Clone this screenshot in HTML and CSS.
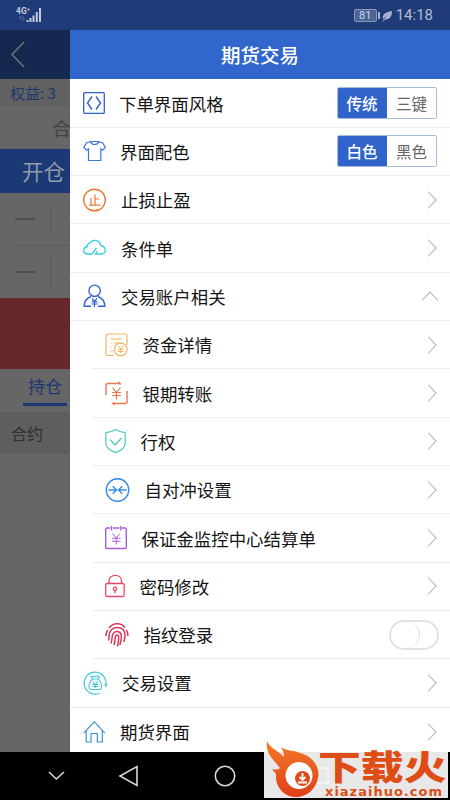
FILE: index.html
```html
<!DOCTYPE html>
<html lang="zh-CN">
<head>
<meta charset="utf-8">
<title>期货交易</title>
<link rel="stylesheet" href="styles.css">
</head>
<body>
<div class="phone">
  <header class="status">
    <svg class="signal" width="28" height="18" viewBox="0 0 28 18"><text x="0" y="8" class="net">4G⁺</text><path d="M4.500 10v4.500M3 12l1.500-2 M7 10v4.500l1.500-2" stroke="#536a9d" fill="none"/><path d="M11.500 16v-2M14.500 16v-4M17.500 16V9.500M20.800 16V6M24 16V2" stroke="#c3cbdd" stroke-width="2"/></svg>
    <div class="status-right">
      <span class="battery">81</span><i class="battery-tip"></i>
      <svg width="11" height="12" viewBox="0 0 11 12"><path d="M1 9C0 4 4 2 10 1c0 5-2 9-7 8.500L1 11.500 .5 11l5-6z" fill="#a9b5ce"/></svg>
      <time>14:18</time>
    </div>
  </header>
  <div class="body">
    <aside class="behind">
      <div class="back"><svg width="15" height="27" viewBox="0 0 15 27"><path d="M14 1 2 13.500 14 26" fill="none" stroke="#777672" stroke-width="1.400"/></svg></div>
      <div class="equity">权益: 3</div>
      <div class="contract">合</div>
      <div class="open">开仓</div>
      <div class="field"><i></i></div>
      <div class="field second"><i></i></div>
      <div class="sell"></div>
      <div class="tab"><span>持仓</span></div>
      <div class="column">合约</div>
    </aside>
    <main class="drawer">
      <h1>期货交易</h1>
      <div class="row"><svg class="ic w22" viewBox="0 0 22 24" stroke="#2f62cc"><rect x=".7" y="1.700" width="20.600" height="20.600" rx="1" stroke-width="1.300"/><path d="M9 5.500 4.500 12 9 18.500M13 5.500l4.500 6.500-4.500 6.500" stroke-width="1.400"/></svg><span>下单界面风格</span><div class="seg"><b>传统</b><em>三键</em></div></div>
      <div class="row"><svg class="ic w23" viewBox="0 0 23 24" stroke="#3e74d8"><path d="M7.500 2.500 3.500 4 .8 8.500l3 2.700L5.500 10v11.500h12.300V10l1.700 1.200 3-2.700L19.700 4l-4-1.500c-1.200 4-7 4-8.200 0zM7.500 2.500h8.200" stroke-width="1.200"/></svg><span>界面配色</span><div class="seg"><b>白色</b><em>黑色</em></div></div>
      <div class="row"><svg class="ic w24" viewBox="0 0 24 24" stroke="#ee7831"><circle cx="11.500" cy="12" r="10.800" stroke-width="1.400"/><path d="M12 6.500v10.500M12 11h4.500M8 10v7M6 17.200h11.500" stroke-width="1.200"/></svg><span>止损止盈</span><i class="next"></i></div>
      <div class="row"><svg class="ic w24" viewBox="0 0 24 24" stroke="#35cce0"><path d="M9 18H4.500C-.5 17.500-.5 11.500 4.500 10.500 4 8 5.500 7.200 7 7.200c3-5 10-3 10.500 2.300 5 .5 6.500 7 2 8.500h-7l2-3M9 18l4.500-6" stroke-width="1.300"/></svg><span>条件单</span><i class="next"></i></div>
      <div class="row"><svg class="ic w24" viewBox="0 0 24 24" stroke="#2f62d8"><circle cx="11.600" cy="6.800" r="5.700" stroke-width="1.400"/><path d="M8 22.300H1.200c0-5 2-8 6.800-9.800M15 12.500c4.500 1.800 6.800 4.800 6.800 9.800H15" stroke-width="1.400"/><path d="m9 14.500 2.500 2.800 2.500-2.800M11.500 17v6M8.500 17.800h6M8.500 20h6" stroke-width="1.200"/></svg><span>交易账户相关</span><i class="next up"></i></div>
      <div class="group">
        <div class="row"><svg class="ic w23" viewBox="0 0 23 24" stroke="#f2b45d"><path d="M9 22.500H3a2 2 0 0 1-2-2V3a2 2 0 0 1 2-2h17a2 2 0 0 1 2 2v9M5.500 6H17M5.500 10h1M9 10h7M5.500 14h1M5.500 18h2.500" stroke-width="1.200"/><circle cx="15.800" cy="16.500" r="6.300" stroke-width="1.200"/><path d="m13.500 13 2.300 3 2.300-3M15.800 16v4.500M13 16.300h5.500M13 18.500h5.500"/></svg><span>资金详情</span><i class="next"></i></div>
        <div class="row"><svg class="ic w23" viewBox="0 0 23 24" stroke="#ed7950"><path d="M1 14V4.500a2 2 0 0 1 2-2h12L13.500.8M22 10v10.500a2 2 0 0 1-2 2H8l1.500 1.300M15 2.500v1.300M8 22.500v-1.300" stroke-width="1.400"/><path d="m7.500 6.500 4 5 4-5M11.500 11.500v7M7 11.500h9M7 14.500h9" stroke-width="1.200"/></svg><span>银期转账</span><i class="next"></i></div>
        <div class="row"><svg class="ic w21" viewBox="0 0 21 24" stroke="#4dc9ba"><path d="M10.500.5C7.500 2.500 4.500 3.500.8 3.700v10c0 4.500 4 7.800 9.700 9.900 5.700-2.100 9.700-5.400 9.700-9.900v-10C16.500 3.500 13.500 2.500 10.500.5z" stroke-width="1.200"/><path d="m5 10.500 5 5.500L16.500 9" stroke-width="1.200"/></svg><span>行权</span><i class="next"></i></div>
        <div class="row"><svg class="ic w25" viewBox="0 0 25 25" stroke="#348be9"><circle cx="12.500" cy="12.500" r="11.700" stroke-width="1.400"/><path d="M3 12.500h8M7.500 8.500l4 4-4 4M22 12.500h-8M17.500 8.500l-4 4 4 4" stroke-width="1.400"/></svg><span>自对冲设置</span><i class="next"></i></div>
        <div class="row"><svg class="ic w22" viewBox="0 0 22 24" stroke="#a95bdd"><path d="M5 2H2a1.300 1.300 0 0 0-1.300 1.300V21A1.300 1.300 0 0 0 2 22.500h18a1.300 1.300 0 0 0 1.300-1.300V3.300A1.300 1.300 0 0 0 20 2h-3M8 2h6.500M6.500 0v4.500M15.800 0v4.500" stroke-width="1.400"/><path d="m7.500 7.500 3.700 4.500L15 7.500M11.200 12v6.500M7 12.300h8.500M7 15.200h8.500"/></svg><span>保证金监控中心结算单</span><i class="next"></i></div>
        <div class="row"><svg class="ic w20" viewBox="0 0 20 24" stroke="#e84867"><rect x=".7" y="9.500" width="18.500" height="13" rx="1.500" stroke-width="1.300"/><path d="M4 9.500V7c0-7.500 12.500-7.500 12.500 0v2.500" stroke-width="1.300"/><circle cx="10" cy="14.800" r="1.700" stroke-width="1.300"/><path d="M10 16.500v2.500" stroke-width="1.500"/></svg><span>密码修改</span><i class="next"></i></div>
        <div class="row"><svg class="ic w24" viewBox="0 0 24 24" stroke="#dc3858" stroke-width="1.500"><path d="M4 5C8-.5 16-.5 20 4.500M1 13c0-2 .5-4 1.800-6M21.500 7c1 2 1.500 3.500 1.500 6M3.500 17.500C4.500 15 3.500 12 5 9c3-6 12-6 14.500 0 .8 2.500.5 6-.5 10M6 20.500c1.500-4 .5-6.500 2-9.500C10 7 15.500 8 16.300 12c.3 3.500-.3 6.500-1.500 10M9 22c1.500-4 .5-8 2-9.500 3.500-2 3 4 1.500 11"/></svg><span>指纹登录</span><i class="switch"></i></div>
      </div>
      <div class="row"><svg class="ic w25" viewBox="0 0 25 24" stroke="#41c8d9"><path d="M16.500 22.200A11 11 0 1 1 22.700 15l-1-1.500M22.700 15l1.500-1.500" stroke-width="1.200"/><path d="M9.500 8 8 5.500c1.500-1 2.500.5 4 0s2.500-1 4.500 0L15 8zM9.500 8C6 10.500 4.500 18 8 18.500h8.500C20.500 18 18.500 10.500 15 8M9.500 10.500l2.700 3 2.700-3M12.200 13.500v3.500M9.500 13.500H15M9.500 15.500H15" stroke-width="1.100"/></svg><span>交易设置</span><i class="next"></i></div>
      <div class="row last"><svg class="ic w23" viewBox="0 0 23 24" stroke="#3d92e2"><path d="m.8 12.800 10.500-11 10.500 11M3.200 10.800V22h4.900v-8.500h6.200V22h5V10.800" stroke-width="1.200"/></svg><span>期货界面</span><i class="next"></i></div>
    </main>
  </div>
  <nav class="nav">
    <svg width="450" height="48" viewBox="0 0 450 48" fill="none" stroke="#d9d9d9" stroke-width="1.600"><path d="m49 20 7.300 7L64 20M137 14.500v19L120 24z"/><circle cx="225" cy="24" r="9.700"/></svg>
  </nav>
  <div class="mark">
    <i class="ghost"></i>
    <svg class="flame" width="56" height="58" viewBox="0 0 56 58"><defs><linearGradient id="g" x1="0" y1="0" x2="0" y2="1"><stop offset="0" stop-color="#f47a2c"/><stop offset="1" stop-color="#de3f15"/></linearGradient></defs><path fill="url(#g)" d="M3 1c3 7 10 9 17 16 0-4-1-7-3-10 5 4 12 3 19 6 15 4 20 16 18 25-2 11-11 19-22 19-14 0-21-12-20-23-1-2-3-3-4-5 3 1 6 1 8-1C10 20 1 14 3 1z"/><circle cx="35" cy="35.500" r="13.500" fill="#fff"/><circle cx="38.500" cy="38.500" r="7.500" fill="#df4a1d"/><path d="M38.500 33v6M35.500 37l3 3 3-3M34 42.500h9" fill="none" stroke="#fff" stroke-width="1.800"/></svg>
    <div class="words"><strong>下载火</strong><small>xiazaihuo.com</small></div>
  </div>
</div>
</body>
</html>
```
FILE: styles.css
```css
* { box-sizing: border-box; }
body { margin: 0; font-family: "Noto Sans CJK SC", sans-serif; }
i, em { font-style: normal; }
.phone { position: relative; width: 450px; height: 800px; overflow: hidden; background: #000; display: flex; flex-direction: column; }
.status { height: 30px; flex: none; background: #203c78; display: flex; justify-content: space-between; padding: 6px 17px 0 16px; }
.net { font: bold 8.500px Roboto, sans-serif; fill: #c3cbdd; }
.status-right { display: flex; align-items: center; height: 19px; color: #b3bdd3; }
.battery { width: 23px; height: 13px; border: 1px solid #8798bb; border-radius: 2px; background: #4c6394; color: #d0d7e5; font: 11px/11px Roboto, sans-serif; text-align: center; }
.battery-tip { width: 2px; height: 7px; margin: 0 2px 0 1px; background: #a9b5ce; }
.status-right time { margin-left: 3px; font: 15px/19px Roboto, sans-serif; }
.body { height: 722px; flex: none; display: flex; }
.behind { width: 70px; background: #666; overflow: hidden; white-space: nowrap; }
.back { height: 49px; background: #142850; padding: 11px 0 0 10px; }
.equity { height: 27px; background: #616161; color: #1b376f; font-size: 15px; line-height: 27px; padding-left: 10px; }
.contract { height: 43px; line-height: 43px; padding-left: 52px; font-size: 19px; color: #424242; }
.open { height: 44px; line-height: 43px; background: #1b3974; color: #939ba9; font-size: 21.500px; padding-left: 22px; }
.field { height: 53px; margin-left: 12px; border-bottom: 1px solid #5b5b5b; display: flex; align-items: center; }
.field::before { content: ""; width: 20px; height: 2px; background: #505050; margin-left: 3px; }
.field i { width: 1px; height: 31px; margin-left: 15px; background: #595959; }
.field.second { height: 52px; border: 0; }
.sell { height: 71px; background: #662829; }
.tab { height: 43px; display: flex; justify-content: flex-end; padding: 0 3px 6px 0; }
.tab span { width: 44px; border-bottom: 3px solid #1b3872; color: #1b3872; font-size: 17px; line-height: 34px; text-align: center; }
.column { height: 42px; line-height: 42px; padding-left: 11px; background: #5e5e5e; color: #303030; font-size: 16px; }
.drawer { width: 380px; overflow: hidden; background: #fff; color: #151515; }
h1 { margin: 0 0 .4px; height: 49px; background: #3166cc; color: #fff; font-size: 19.500px; line-height: 50px; font-weight: 500; text-align: center; }
.row { height: 48.330px; padding: 0 12px 0 13px; border-bottom: 1px solid #ededed; display: flex; align-items: center; gap: 14px; font-size: 17.450px; white-space: nowrap; }
.row > span { flex: 1; }
.row.last { border: 0; }
.ic { height: 24px; flex: none; fill: none; }
.w20 { width: 20px; } .w21 { width: 21px; } .w22 { width: 22px; } .w23 { width: 23px; } .w24 { width: 24px; } .w25 { width: 25px; }
.group { padding-left: 22px; }
.group .row { padding-left: 13px; gap: 14.500px; }
.next { width: 12px; height: 12px; flex: none; border: solid #b4b4b8; border-width: 1.500px 1.500px 0 0; transform: translateX(-3.500px) rotate(45deg) skew(2deg, 2deg); }
.next.up { transform: translate(-2px, 4px) rotate(-45deg) skew(-2deg, -2deg); }
.seg { width: 100px; height: 32px; flex: none; margin-right: 1px; display: flex; border: 1px solid #a9bddd; border-radius: 2px; overflow: hidden; font-size: 15.500px; line-height: 31px; text-align: center; }
.seg b { width: 50px; margin: -1px 0 -1px -1px; line-height: 33px; font-weight: 500; background: #3064cb; color: #fff; }
.seg em { flex: 1; color: #666; }
.switch { width: 50px; height: 30px; margin-right: -1px; border: 2px solid #e2e2e2; border-radius: 15px; }
.switch::before { content: ""; display: block; width: 28px; height: 26px; border-right: 1.500px solid #dedede; border-radius: 13px; }
.nav { height: 48px; }
.mark { position: absolute; left: 264px; top: 752px; width: 184px; height: 46px; background: #e8e8e8; }
.flame { position: absolute; left: 0; top: -12px; }
.ghost { position: absolute; left: 48px; top: 15px; width: 17px; height: 17px; border: 2px solid #f2f2f2; }
.words { position: absolute; left: 54px; top: -1px; width: 130px; color: #df4d17; }
.words strong { display: block; width: max-content; height: 34px; font-size: 34px; font-weight: 900; line-height: 30px; transform: scaleX(1.26); transform-origin: left; white-space: nowrap; }
.words small { display: block; padding-left: 7px; font: bold 13px/13px "DejaVu Sans", sans-serif; letter-spacing: 1px; }
```
